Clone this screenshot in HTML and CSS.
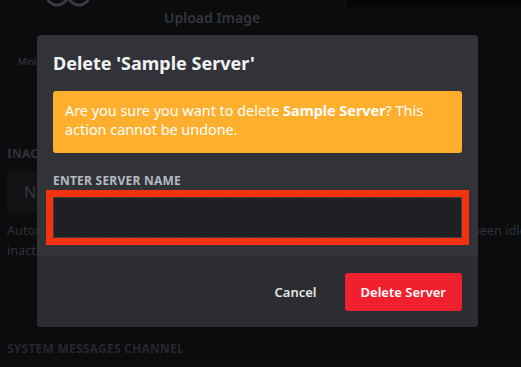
FILE: index.html
```html
<!DOCTYPE html>
<html lang="en">
<head>
    <meta charset="UTF-8">
    <meta name="viewport" content="width=device-width, initial-scale=1.0">
    <title>Server Settings - Delete Server</title>
    <link rel="stylesheet" href="styles.css">
</head>
<body>
    <div class="settings">
        <div class="top-row">
            <div class="avatar">
                <svg width="42" height="8" viewBox="0 0 42 8">
                    <circle cx="10" cy="-6" r="11" fill="none" stroke="#3a3c41" stroke-width="3"/>
                    <circle cx="32" cy="-6" r="11" fill="none" stroke="#3a3c41" stroke-width="3"/>
                </svg>
            </div>
            <div class="upload">Upload Image</div>
            <div class="strip"></div>
        </div>
        <div class="mini">Minimum Size: 128x128</div>

        <h3 class="section-title">Inactive Channel</h3>
        <div class="select-box">No Inactive Channel</div>
        <p class="help">
            <span class="line">Automatically move members to this channel and mute them when they have been idle for longer</span>
            <span class="line">inactive timeout. This does not affect browsers.</span>
        </p>

        <h3 class="section-title dim">System Messages Channel</h3>
    </div>

    <div class="modal">
        <div class="modal-body">
            <h2 class="modal-title">Delete 'Sample Server'</h2>
            <div class="warning">
                Are you sure you want to delete <strong>Sample Server</strong>? This action cannot be undone.
            </div>
            <label class="field-label" for="server-name">Enter Server Name</label>
            <input type="text" id="server-name" class="field-input">
        </div>
        <div class="modal-footer">
            <button class="btn-link">Cancel</button>
            <button class="btn-danger">Delete Server</button>
        </div>
    </div>
</body>
</html>
```

FILE: styles.css
```css
body {
    font-family: 'Noto Sans', 'Open Sans', sans-serif;
    background: #0b0c0e;
    margin: 0;
    padding: 0;
    width: 521px;
    height: 367px;
    overflow: hidden;
    position: relative;
}

/* underlying settings page */
.settings {
    padding-left: 7px;
    color: #34363b;
}

.top-row {
    display: flex;
    height: 30px;
}

.avatar {
    margin-left: 40px;
    width: 42px;
    height: 8px;
}

.avatar svg {
    display: block;
}

.upload {
    margin-left: 75px;
    margin-top: 8px;
    font-size: 14px;
    font-weight: 600;
    line-height: 20px;
    color: #35373c;
}

.strip {
    margin-left: auto;
    width: 174px;
    height: 7px;
    background: #050607;
}

.mini {
    margin: 26px 0 0 11px;
    font-size: 9px;
    line-height: 12px;
    color: #3a3c41;
}

.section-title {
    margin: 78px 0 0;
    font-size: 12px;
    font-weight: 700;
    line-height: 16px;
    text-transform: uppercase;
    letter-spacing: 0.02em;
    color: #303236;
}

.section-title.dim {
    margin-top: 81px;
    color: #26282c;
}

.select-box {
    margin-top: 9px;
    width: 300px;
    height: 42px;
    box-sizing: border-box;
    padding-left: 17px;
    display: flex;
    align-items: center;
    background: #111214;
    font-size: 16px;
    color: #35373c;
}

.help {
    margin: 7px 0 0;
    font-size: 12.7px;
    line-height: 20px;
    color: #303236;
}

.help .line {
    display: block;
    white-space: nowrap;
}

/* modal */
.modal {
    position: absolute;
    top: 35px;
    left: 37px;
    width: 441px;
    height: 292px;
    background: #313338;
    border-radius: 4px;
    overflow: hidden;
    display: flex;
    flex-direction: column;
}

.modal-body {
    padding: 16px 16px 18px;
}

.modal-title {
    margin: 0;
    font-size: 18px;
    font-weight: 700;
    line-height: 24px;
    color: #f2f3f5;
}

.warning {
    margin-top: 16px;
    padding: 10px 12px 14px;
    background: #ffaf2e;
    border-radius: 3px;
    font-size: 14.4px;
    line-height: 19px;
    color: #fff;
}

.warning strong {
    font-weight: 700;
}

.field-label {
    display: block;
    margin-top: 20px;
    font-size: 12px;
    font-weight: 700;
    line-height: 16px;
    text-transform: uppercase;
    letter-spacing: 0.02em;
    color: #b5bac1;
}

.field-input {
    display: block;
    margin-top: 8px;
    width: 100%;
    height: 41px;
    box-sizing: border-box;
    border: 1px solid #3b3d42;
    border-radius: 0;
    background-color: #1e1f22;
    background-image: radial-gradient(#26272b 0.6px, transparent 0.8px);
    background-size: 3px 3px;
    outline: 7px solid #f5320f;
    font-family: inherit;
    font-size: 16px;
    color: #dbdee1;
}

.modal-footer {
    flex: 1;
    background: #2b2d31;
    display: flex;
    justify-content: flex-end;
    align-items: center;
    gap: 12px;
    padding: 0 16px;
}

.btn-link {
    background: none;
    border: none;
    padding: 0 16px;
    font-family: inherit;
    font-size: 13px;
    font-weight: 600;
    color: #e3e5e8;
    cursor: pointer;
}

.btn-danger {
    background: #f1202f;
    border: none;
    border-radius: 3px;
    height: 38px;
    padding: 0 16px;
    font-family: inherit;
    font-size: 13px;
    font-weight: 600;
    color: #fff;
    cursor: pointer;
}
```
